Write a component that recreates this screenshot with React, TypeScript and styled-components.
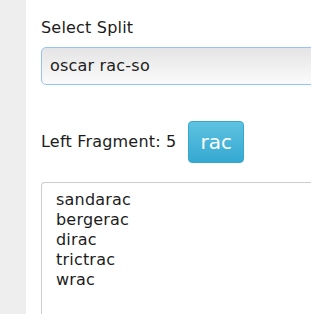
import { FC } from 'react'
import styled, { createGlobalStyle } from 'styled-components'

const GlobalStyle = createGlobalStyle`
  html, body {
    margin: 0;
    padding: 0;
    background: #eeeeee;
    overflow: hidden;
  }
`

const Page = styled.div`
  font-family: 'DejaVu Sans', Verdana, sans-serif;
  font-size: 16px;
  line-height: 20px;
  letter-spacing: 0.2px;
  color: #1c1c1c;
  margin-left: 26px;
  width: 320px;
  min-height: 314px;
  background: #ffffff;
  padding: 18px 0 0 15px;
  box-sizing: border-box;
`

const Label = styled.div`
  margin-bottom: 9px;
`

const SelectBox = styled.div`
  display: flex;
  align-items: center;
  height: 38px;
  box-sizing: border-box;
  padding: 0 8px;
  border: 1px solid #94c4f7;
  border-radius: 5px;
  background: linear-gradient(#e4e4e4, #fbfbfb);
  margin-bottom: 36px;
`

const FragmentRow = styled.div`
  display: flex;
  align-items: center;
  gap: 12px;
  margin-bottom: 19px;
`

const Chip = styled.div`
  height: 42px;
  box-sizing: border-box;
  padding: 0 11px;
  display: flex;
  align-items: center;
  font-size: 20px;
  letter-spacing: 0;
  color: #ffffff;
  border: 1px solid #36a6cf;
  border-radius: 4px;
  background: linear-gradient(#5ec2e0, #35a9d2);
`

const WordList = styled.div`
  border: 1px solid #cccccc;
  border-right: none;
  border-bottom: none;
  border-radius: 4px 0 0 0;
  padding: 7px 0 0 14px;
  height: 200px;
`

interface Props {
  words?: string[]
}

const App: FC<Props> = ({ words = ['sandarac', 'bergerac', 'dirac', 'trictrac', 'wrac'] }) => {
  return (
    <>
      <GlobalStyle />
      <Page>
        <Label>Select Split</Label>
        <SelectBox>oscar rac-so</SelectBox>
        <FragmentRow>
          <span>Left Fragment: 5</span>
          <Chip>rac</Chip>
        </FragmentRow>
        <WordList>
          {words.map((w) => (
            <div key={w}>{w}</div>
          ))}
        </WordList>
      </Page>
    </>
  )
}

export default App
